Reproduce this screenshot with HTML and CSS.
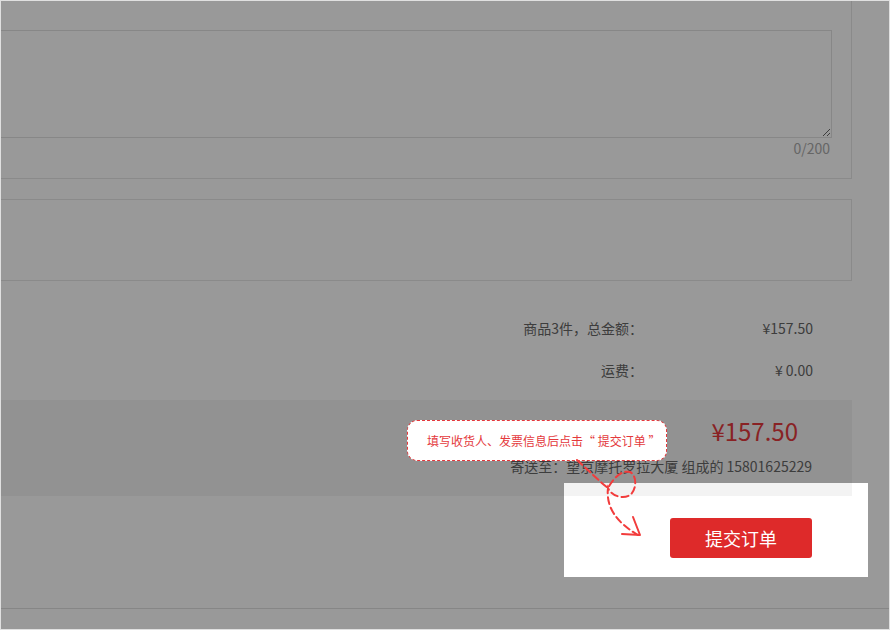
FILE: index.html
```html
<!DOCTYPE html>
<html lang="zh-CN">
<head>
    <meta charset="UTF-8">
    <meta name="viewport" content="width=device-width, initial-scale=1.0">
    <title>提交订单</title>
    <link rel="stylesheet" href="styles.css">
</head>
<body>
    <div class="frame">
        <div class="main">
            <!-- 备注 -->
            <div class="box remark-box">
                <textarea class="remark" maxlength="200"></textarea>
                <div class="counter">0/200</div>
            </div>

            <!-- 发票 -->
            <div class="box invoice-box"></div>

            <!-- 金额 -->
            <div class="summary">
                <div class="sum-row">
                    <span class="sum-label">商品3件，总金额：</span>
                    <span class="sum-value">¥157.50</span>
                </div>
                <div class="sum-row">
                    <span class="sum-label">运费：</span>
                    <span class="sum-value">¥ 0.00</span>
                </div>
            </div>

            <div class="pay-band">
                <div class="pay-total">¥157.50</div>
                <div class="pay-address">寄送至：望京摩托罗拉大厦 组成的 15801625229</div>
            </div>

            <div class="submit-row">
                <button class="submit-btn">提交订单</button>
            </div>
        </div>

        <div class="footer"></div>

        <!-- guide overlay -->
        <div class="spotlight"></div>
        <div class="guide-tip">填写收货人、发票信息后点击“ 提交订单 ”</div>
        <svg class="guide-arrow" width="80" height="90" viewBox="0 0 80 90">
            <path d="M7 5 C18 15, 30 27, 38 33 C44 22, 52 15, 60 17 C67 20, 67 35, 60 40 C54 44, 42 42, 38 33 C36 50, 44 66, 68 80" fill="none" stroke="#f23c3c" stroke-width="2" stroke-dasharray="7 4" stroke-linecap="round"/>
            <path d="M52 79 L70 80 L63 62" fill="none" stroke="#f23c3c" stroke-width="2" stroke-linecap="round" stroke-linejoin="round"/>
        </svg>
    </div>
</body>
</html>
```

FILE: styles.css
```css
* {
    box-sizing: border-box;
}
body {
    margin: 0;
    font-family: "Microsoft YaHei", "Noto Sans CJK SC", sans-serif;
    font-size: 14px;
    color: #666;
    background: #fff;
}
.frame {
    position: relative;
    width: 890px;
    height: 630px;
    border: 1px solid #e0e0e0;
    overflow: hidden;
    background: #fff;
}
.main {
    width: 891px;
    margin-left: -40px;
}
.box {
    border: 1px solid #e6e6e6;
}
.remark-box {
    margin-top: -10px;
    padding: 38px 19px 20px;
}
.remark {
    display: block;
    width: 100%;
    height: 108px;
    margin: 0;
    border: 1px solid #e2e2e2;
    background: #fff;
}
.counter {
    line-height: 20px;
    text-align: right;
    padding-right: 2px;
    color: #aaa;
}
.invoice-box {
    margin-top: 20px;
    height: 82px;
}
.summary {
    padding: 26px 39px 9px 0;
}
.sum-row {
    display: flex;
    justify-content: flex-end;
    height: 42px;
    line-height: 42px;
}
.sum-label {
    text-align: right;
}
.sum-value {
    width: 170px;
    text-align: right;
}
.pay-band {
    height: 96px;
    padding: 14px 0 20px;
    background: #f3f3f3;
    text-align: right;
}
.pay-total {
    line-height: 34px;
    font-size: 24px;
    color: #e4393c;
    padding-right: 54px;
}
.pay-address {
    margin-top: 8px;
    line-height: 20px;
    padding-right: 40px;
}
.submit-row {
    display: flex;
    justify-content: flex-end;
    padding: 22px 40px 50px 0;
}
.submit-btn {
    width: 142px;
    height: 40px;
    border: none;
    border-radius: 3px;
    background: #de2a2a;
    color: #fff;
    font-family: inherit;
    font-size: 18px;
    cursor: pointer;
}
.footer {
    border-top: 1px solid #e0e0e0;
    height: 40px;
}
.spotlight {
    position: absolute;
    left: 563px;
    top: 482px;
    width: 304px;
    height: 94px;
    box-shadow: 0 0 0 1200px rgba(0, 0, 0, 0.4);
    pointer-events: none;
}
.guide-tip {
    position: absolute;
    left: 406px;
    top: 419px;
    width: 260px;
    height: 41px;
    padding-left: 19px;
    line-height: 39px;
    border: 1px dashed #e4393c;
    border-radius: 10px;
    background: #fff;
    color: #e4393c;
    font-size: 12px;
    white-space: nowrap;
}
.guide-arrow {
    position: absolute;
    left: 569px;
    top: 454px;
}
```
